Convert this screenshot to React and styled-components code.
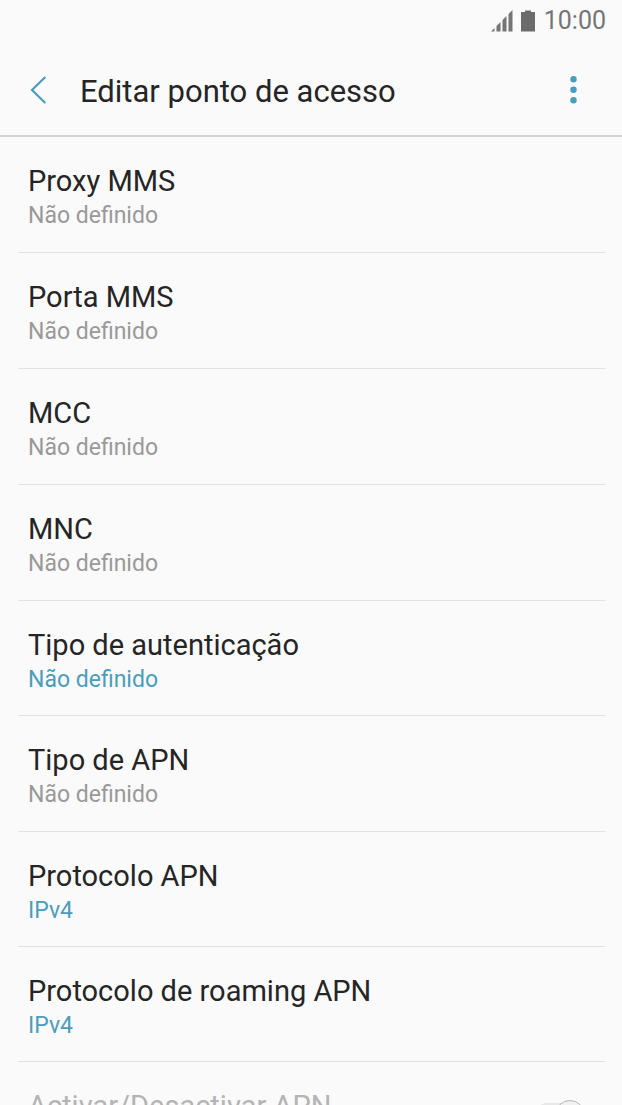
import React, { useState } from 'react';
import styled, { createGlobalStyle } from 'styled-components';

const GlobalStyle = createGlobalStyle`
  * {
    box-sizing: border-box;
  }
  body {
    margin: 0;
    background: #fafafa;
    color: #252525;
    font-family: Roboto, sans-serif;
  }
  button {
    border: none;
    padding: 0;
    background: none;
    color: inherit;
    font: inherit;
    cursor: pointer;
  }
`;

const Screen = styled.div`
  height: 100vh;
  overflow: hidden;
`;

const StatusBar = styled.div`
  display: flex;
  align-items: center;
  justify-content: flex-end;
  height: 42px;
  padding: 0 16px;
  color: #757575;
`;

const BatteryIcon = styled.svg`
  margin: 0 9px 0 8px;
`;

const Clock = styled.time`
  font-size: 25px;
  line-height: 42px;
`;

const Header = styled.header`
  display: flex;
  align-items: center;
  height: 95px;
  padding: 0 28px;
  border-bottom: 2px solid #d2d2d2;
`;

const IconButton = styled.button`
  display: flex;
  align-items: center;
  justify-content: ${props => (props.$end ? 'flex-end' : 'flex-start')};
  width: 52px;
  height: 48px;
  color: #4b9dbb;
`;

const PageTitle = styled.h1`
  flex: 1;
  margin: 0;
  padding-top: 6px;
  font-size: 31px;
  font-weight: 400;
  line-height: 40px;
`;

const SettingList = styled.ul`
  margin: 0;
  padding: 0 17px 0 18px;
  list-style: none;
`;

const SettingItem = styled.li`
  border-bottom: 1px solid #e2e2e2;
`;

const SettingButton = styled.button`
  display: flex;
  flex-direction: column;
  width: 100%;
  padding: 24px 10px ${props => (props.$choice ? '21px' : '22px')};
  text-align: left;
`;

const SettingTitle = styled.span`
  font-size: 29px;
  line-height: 40px;
`;

const SettingValue = styled.span`
  font-size: 23px;
  line-height: 29px;
  color: ${props => (props.$choice ? '#4b9dbb' : '#999999')};
`;

const SwitchLabel = styled.label`
  display: flex;
  align-items: flex-start;
  justify-content: space-between;
  padding: 24px 10px;
  color: #b4b4b4;
`;

const Switch = styled.input`
  appearance: none;
  display: flex;
  align-items: center;
  justify-content: flex-end;
  width: 50px;
  height: 24px;
  margin: 17px 10px 0 0;
  border-radius: 12px;
  background: #e8e8e8;
  &::before {
    content: '';
    width: 28px;
    height: 28px;
    border: 1px solid #b8b8b8;
    border-radius: 50%;
    background: #f2f2f2;
  }
`;

const settings = [
  { title: 'Proxy MMS', value: 'Não definido' },
  { title: 'Porta MMS', value: 'Não definido' },
  { title: 'MCC', value: 'Não definido' },
  { title: 'MNC', value: 'Não definido' },
  { title: 'Tipo de autenticação', value: 'Não definido', choice: true },
  { title: 'Tipo de APN', value: 'Não definido' },
  { title: 'Protocolo APN', value: 'IPv4', choice: true },
  { title: 'Protocolo de roaming APN', value: 'IPv4', choice: true },
];

function Setting({ title, value, choice }) {
  return (
    <SettingItem>
      <SettingButton type="button" $choice={choice}>
        <SettingTitle>{title}</SettingTitle>
        <SettingValue $choice={choice}>{value}</SettingValue>
      </SettingButton>
    </SettingItem>
  );
}

export default function App() {
  const [enabled] = useState(true);

  return (
    <Screen>
      <GlobalStyle />
      <StatusBar>
        <svg width="22" height="22" viewBox="0 0 22 22" fill="currentColor" aria-hidden="true">
          <path d="M0 21.5L3.5 18V21.5ZM5.5 16L9.5 12V21.5H5.5ZM11.5 10L15.5 6V21.5H11.5ZM17.5 4L21.5 0V21.5H17.5Z" />
        </svg>
        <BatteryIcon width="14" height="22" viewBox="0 0 14 22" fill="#6b6b6b" aria-hidden="true">
          <path d="M4 0.5H10V2H14V21.5H0V2H4Z" />
        </BatteryIcon>
        <Clock>10:00</Clock>
      </StatusBar>
      <Header>
        <IconButton type="button" aria-label="Voltar">
          <svg width="20" height="30" viewBox="0 0 20 30" fill="none" stroke="currentColor" strokeWidth="2.2">
            <path d="M17.3 3L4 16L17.3 29" />
          </svg>
        </IconButton>
        <PageTitle>Editar ponto de acesso</PageTitle>
        <IconButton type="button" aria-label="Mais opções" $end>
          <svg width="42" height="30" viewBox="0 0 42 30" fill="currentColor">
            <circle cx="21.5" cy="5.3" r="3.2" />
            <circle cx="21.5" cy="15.8" r="3.2" />
            <circle cx="21.5" cy="26.3" r="3.2" />
          </svg>
        </IconButton>
      </Header>
      <main>
        <SettingList>
          {settings.map(item => (
            <Setting key={item.title} {...item} />
          ))}
          <li>
            <SwitchLabel>
              <SettingTitle>Activar/Desactivar APN</SettingTitle>
              <Switch type="checkbox" role="switch" checked={enabled} disabled readOnly />
            </SwitchLabel>
          </li>
        </SettingList>
      </main>
    </Screen>
  );
}
